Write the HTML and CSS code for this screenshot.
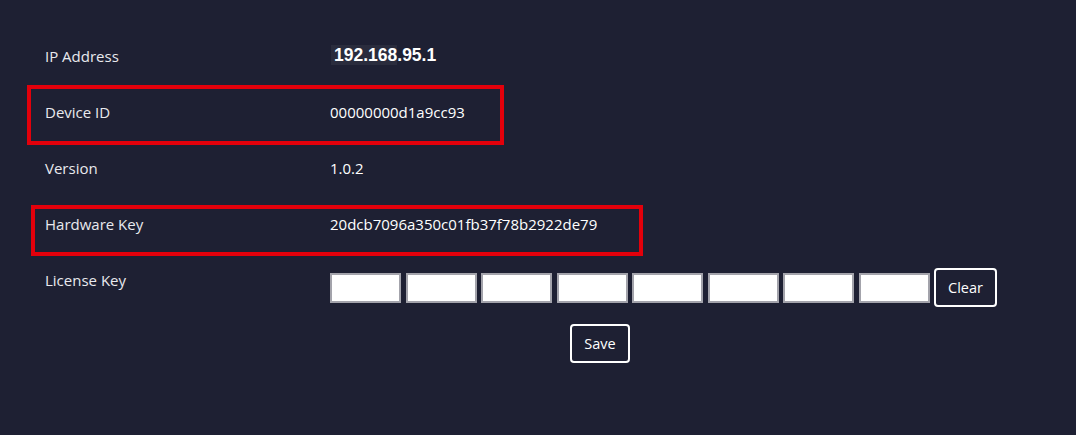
FILE: index.html
```html
<!DOCTYPE html>
<html>
<head>
<meta charset="utf-8">
<link rel="stylesheet" href="styles.css">
</head>
<body>
<div class="page">
  <div class="row">
    <div class="label">IP Address</div>
    <div class="value ip"><span class="sel">192.168</span>.95.1</div>
  </div>
  <div class="row">
    <div class="label">Device ID</div>
    <div class="value">00000000d1a9cc93</div>
  </div>
  <div class="row">
    <div class="label">Version</div>
    <div class="value">1.0.2</div>
  </div>
  <div class="row">
    <div class="label">Hardware Key</div>
    <div class="value">20dcb7096a350c01fb37f78b2922de79</div>
  </div>
  <div class="row license">
    <div class="label">License Key</div>
    <div class="keys">
      <input class="key" type="text"><input class="key" type="text"><input class="key" type="text"><input class="key" type="text"><input class="key" type="text"><input class="key" type="text"><input class="key" type="text"><input class="key" type="text">
      <button class="btn clear">Clear</button>
    </div>
  </div>
  <div class="actions">
    <button class="btn save">Save</button>
  </div>
  <div class="mark mark-device"></div>
  <div class="mark mark-hw"></div>
</div>
</body>
</html>
```
FILE: styles.css
```css
html, body {
  margin: 0;
  padding: 0;
  background: #1e2033;
}
body {
  font-family: "Open Sans", "Noto Sans", sans-serif;
  font-size: 15px;
  color: #f2f2f5;
}
.page {
  position: relative;
  padding: 28px 0 0 45px;
  height: 407px;
}
.row {
  display: grid;
  grid-template-columns: 285px auto;
  align-items: center;
  height: 56px;
}
.label {
  color: #e9e9ee;
}
.value {
  color: #ffffff;
}
.ip {
  font-family: "Liberation Sans", Arial, sans-serif;
  font-size: 17.5px;
  font-weight: 600;
  margin-top: -2px;
  padding-left: 4px;
}
.sel {
  background: #2a2c3d;
  margin-left: -3px;
  padding-left: 3px;
}
.license {
  align-items: start;
  height: 72px;
}
.license .label {
  padding-top: 18px;
}
.keys {
  display: flex;
  align-items: center;
  gap: 4.5px;
  padding-top: 16px;
}
.key {
  width: 71px;
  height: 30px;
  box-sizing: border-box;
  margin: 0;
  padding: 0;
  background: #ffffff;
  border: 2px solid #a3a3ab;
}
.btn {
  font-family: "Open Sans", "Noto Sans", sans-serif;
  font-size: 14.5px;
  color: #ffffff;
  background: transparent;
  border: 2px solid #ffffff;
  border-radius: 4px;
  height: 39px;
  box-sizing: border-box;
  padding: 0 10px;
  cursor: pointer;
}
.clear {
  width: 63px;
}
.save {
  width: 60px;
}
.actions {
  display: flex;
  padding-left: 525px;
}
.mark {
  position: absolute;
  border: 4px solid #e3000b;
  box-sizing: border-box;
}
.mark-device {
  left: 27px;
  top: 85px;
  width: 477px;
  height: 60px;
}
.mark-hw {
  left: 31px;
  top: 205px;
  width: 612px;
  height: 51px;
}
```
